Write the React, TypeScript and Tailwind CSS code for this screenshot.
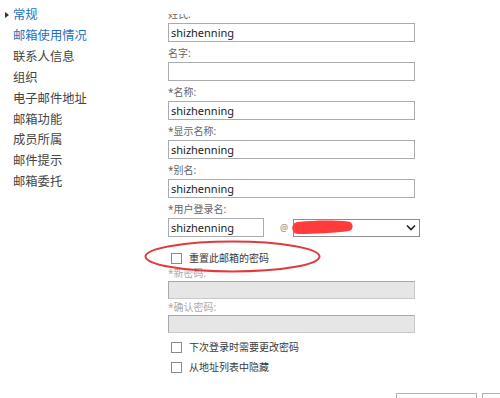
const navItems = [
  { id: 'general', label: '常规', active: true },
  { id: 'usage', label: '邮箱使用情况', active: true },
  { id: 'contact', label: '联系人信息' },
  { id: 'org', label: '组织' },
  { id: 'email', label: '电子邮件地址' },
  { id: 'features', label: '邮箱功能' },
  { id: 'member', label: '成员所属' },
  { id: 'tips', label: '邮件提示' },
  { id: 'delegate', label: '邮箱委托' },
];

const font = { fontFamily: '"Noto Sans", "Noto Sans CJK SC", sans-serif' };

function Label({ text }: { text: string }) {
  return <div className="h-[20px] text-[10px] leading-[22px] text-[#666]">{text}</div>;
}

function TextBox({ value = '', width = 'w-[247px]' }: { value?: string; width?: string }) {
  return (
    <div
      className={`${width} h-[19px] border border-[#a9abaf] bg-white px-[2px] text-[11px] leading-[17px] text-[#222]`}
    >
      {value}
    </div>
  );
}

function CheckRow({ label, className }: { label: string; className: string }) {
  return (
    <div className={`flex items-center pl-[3px] ${className}`}>
      <span className="w-[11px] h-[11px] border border-[#8a8a8a] bg-white" />
      <span className="ml-[7px] text-[10px] leading-[11px] text-[#3a3a3a]">{label}</span>
    </div>
  );
}

export default function App() {
  return (
    <div className="relative flex w-[500px] h-[398px] overflow-hidden bg-white" style={font}>
      {/* Left navigation */}
      <ul className="w-[168px] shrink-0 pt-[5px]">
        {navItems.map((item, i) => (
          <li
            key={item.id}
            className={`flex items-center text-[12.3px] leading-[20.9px] ${
              item.active ? 'text-[#1f6fbf]' : 'text-[#444]'
            }`}
          >
            <span className="w-[13px] flex items-center">
              {i === 0 && (
                <span className="ml-[5px] w-0 h-0 border-y-[3px] border-l-[4px] border-y-transparent border-l-[#333]" />
              )}
            </span>
            {item.label}
          </li>
        ))}
      </ul>

      {/* Form */}
      <div className="flex-1 pt-[14px]">
        <div className="h-full overflow-hidden">
          <div className="-mt-[11px]">
            <Label text="姓氏:" />
            <TextBox value="shizhenning" />
            <Label text="名字:" />
            <TextBox />
            <Label text="*名称:" />
            <TextBox value="shizhenning" />
            <Label text="*显示名称:" />
            <TextBox value="shizhenning" />
            <Label text="*别名:" />
            <TextBox value="shizhenning" />
            <Label text="*用户登录名:" />
            <div className="flex items-center">
              <TextBox value="shizhenning" width="w-[96px]" />
              <span className="ml-[16px] w-[9px] text-[9px] text-[#888]">@</span>
              <div className="ml-[4px] flex h-[18px] w-[127px] items-center justify-end border border-[#8d8d8d] bg-white pr-[3px]">
                <svg width="10" height="7" viewBox="0 0 10 7">
                  <path d="M1 1.5 L5 5.5 L9 1.5" fill="none" stroke="#222" strokeWidth="1.6" />
                </svg>
              </div>
            </div>

            <CheckRow label="重置此邮箱的密码" className="mt-[16px]" />

            <div className="h-[17px] text-[10px] leading-[18px] text-[#ababab]">*新密码:</div>
            <div className="h-[18px] w-[247px] border border-[#c9c9c9] border-t-[#a8a8a8] border-l-[#a8a8a8] bg-[#e6e6e6]" />
            <div className="h-[16px] text-[10px] leading-[16px] text-[#ababab]">*确认密码:</div>
            <div className="h-[18px] w-[247px] border border-[#c9c9c9] border-t-[#a8a8a8] border-l-[#a8a8a8] bg-[#e6e6e6]" />

            <CheckRow label="下次登录时需要更改密码" className="mt-[9px]" />
            <CheckRow label="从地址列表中隐藏" className="mt-[9px]" />

            <div className="mt-[20px] flex gap-[5px] pl-[228px]">
              <button className="h-[22px] w-[81px] shrink-0 border border-[#adb2b5] bg-[#fdfdfd] text-[11px]">保存</button>
              <button className="h-[22px] w-[81px] shrink-0 border border-[#adb2b5] bg-[#fdfdfd] text-[11px]">取消</button>
            </div>
          </div>
        </div>
      </div>

      {/* Red annotations drawn over the screenshot */}
      <svg className="pointer-events-none absolute left-0 top-0" width="500" height="398">
        <path
          d="M298 222 C315 220 335 220 348 221.5 C354 222 354 230 349 231 C335 233 315 234 298 234 C291 234 290 222.5 298 222 Z"
          fill="#ff3b3b"
        />
        <ellipse cx="232.5" cy="256.5" rx="87" ry="15" fill="none" stroke="#e23a3a" strokeWidth="2" />
      </svg>
    </div>
  );
}
